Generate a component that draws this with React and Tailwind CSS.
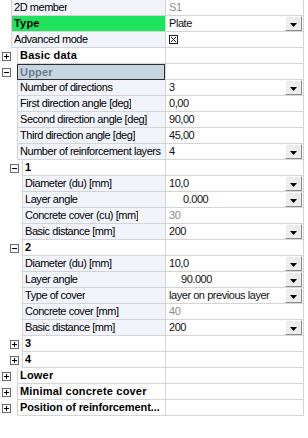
import React from "react";

const rows = [
  { kind: "prop", indent: 11, label: "2D member", value: "S1", gray: true },
  { kind: "prop", indent: 11, label: "Type", bold: true, green: true, value: "Plate", dd: true },
  { kind: "prop", indent: 11, label: "Advanced mode", check: true },
  { kind: "cat", label: "Basic data", icon: "plus" },
  { kind: "cat", label: "Upper", icon: "minus", selected: true },
  { kind: "prop", indent: 17, label: "Number of directions", value: "3", dd: true },
  { kind: "prop", indent: 17, label: "First direction angle [deg]", value: "0,00" },
  { kind: "prop", indent: 17, label: "Second direction angle [deg]", value: "90,00" },
  { kind: "prop", indent: 17, label: "Third direction angle [deg]", value: "45,00" },
  { kind: "prop", indent: 17, label: "Number of reinforcement layers", value: "4", dd: true },
  { kind: "sub", label: "1", icon: "minus" },
  { kind: "prop", indent: 22, label: "Diameter (du) [mm]", value: "10,0", dd: true },
  { kind: "prop", indent: 22, label: "Layer angle", value: "0.000", dd: true, pad: "pl-[17px]" },
  { kind: "prop", indent: 22, label: "Concrete cover (cu) [mm]", value: "30", gray: true },
  { kind: "prop", indent: 22, label: "Basic distance [mm]", value: "200", dd: true },
  { kind: "sub", label: "2", icon: "minus" },
  { kind: "prop", indent: 22, label: "Diameter (du) [mm]", value: "10,0", dd: true },
  { kind: "prop", indent: 22, label: "Layer angle", value: "90.000", dd: true, pad: "pl-[15px]" },
  { kind: "prop", indent: 22, label: "Type of cover", value: "layer on previous layer", dd: true },
  { kind: "prop", indent: 22, label: "Concrete cover [mm]", value: "40", gray: true },
  { kind: "prop", indent: 22, label: "Basic distance [mm]", value: "200", dd: true },
  { kind: "sub", label: "3", icon: "plus" },
  { kind: "sub", label: "4", icon: "plus" },
  { kind: "cat", label: "Lower", icon: "plus" },
  { kind: "cat", label: "Minimal concrete cover", icon: "plus" },
  { kind: "cat", label: "Position of reinforcement...", icon: "plus", tight: true },
];

function ToggleIcon({ type }) {
  return (
    <svg width="9" height="9" viewBox="0 0 9 9" className="block">
      <rect x="0.5" y="0.5" width="8" height="8" fill="#fff" stroke="#6b6b6b" />
      <line x1="2" y1="4.5" x2="7" y2="4.5" stroke="#000" />
      {type === "plus" && <line x1="4.5" y1="2" x2="4.5" y2="7" stroke="#000" />}
    </svg>
  );
}

function CheckGlyph() {
  return (
    <svg width="9" height="9" viewBox="0 0 9 9" className="block">
      <rect x="0.5" y="0.5" width="8" height="8" fill="#fff" stroke="#222" />
      <line x1="2" y1="2" x2="7" y2="7" stroke="#222" />
      <line x1="7" y1="2" x2="2" y2="7" stroke="#222" />
    </svg>
  );
}

function DropButton() {
  return (
    <div className="ml-auto mr-[1px] flex h-[15px] w-[17px] shrink-0 items-center justify-center border border-t-white border-l-white border-r-[#8c8c8c] border-b-[#8c8c8c] bg-[#ececec]">
      <svg width="7" height="4" viewBox="0 0 7 4" className="mt-[2px] block">
        <polygon points="0,0 7,0 3.5,4" fill="#000" />
      </svg>
    </div>
  );
}

function Row({ r }) {
  let left;
  if (r.kind === "prop") {
    left = (
      <div className="flex h-full w-[165px]">
        <div style={{ width: r.indent }} className="shrink-0" />
        <div
          className={
            "flex min-w-0 flex-1 items-center border-l border-b border-[#d4d4d4] pl-[2px] " +
            (r.green ? "bg-[#1fe35c] " : "bg-[#f1f4fb] ") +
            (r.bold ? "font-bold tracking-[0.2px]" : "tracking-[-0.45px]")
          }
        >
          <span className="truncate whitespace-nowrap text-black">{r.label}</span>
        </div>
      </div>
    );
  } else {
    const iconX = r.kind === "cat" ? 2 : 10;
    const cellX = r.kind === "cat" ? 17 : 22;
    left = (
      <div className="flex h-full w-[165px]">
        <div style={{ width: cellX }} className="relative shrink-0">
          <div className="absolute top-[4px]" style={{ left: iconX }}>
            <ToggleIcon type={r.icon} />
          </div>
        </div>
        <div
          className={
            "flex min-w-0 flex-1 items-center overflow-hidden font-bold " +
            (r.tight ? "tracking-[-0.1px] " : "tracking-[0.2px] ") +
            (r.selected
              ? "border border-[#2e2e2e] bg-[#c7d5e1] pl-[2px] text-[#6a7b8b]"
              : "border-l border-b border-[#d4d4d4] bg-white pl-[2px] text-black")
          }
        >
          <span className="whitespace-nowrap">{r.label}</span>
        </div>
      </div>
    );
  }

  return (
    <div className="flex h-[16px]">
      {left}
      <div className="flex h-full w-[139px] items-center border-l border-r border-b border-[#d4d4d4] bg-white">
        {r.check ? (
          <div className="pl-[3px]">
            <CheckGlyph />
          </div>
        ) : r.value ? (
          <span
            className={
              "whitespace-nowrap tracking-[-0.45px] " +
              (r.pad ? r.pad + " " : "pl-[3px] ") +
              (r.gray ? "text-[#8d8d8d]" : "text-[#111]")
            }
          >
            {r.value}
          </span>
        ) : null}
        {r.dd && <DropButton />}
      </div>
    </div>
  );
}

export default function App() {
  return (
    <div
      className="h-[438px] w-[308px] bg-white text-[11px] leading-[15px]"
      style={{ fontFamily: '"Liberation Sans", Arial, sans-serif' }}
    >
      <div className="w-[304px]">
        {rows.map((r, i) => (
          <Row key={i} r={r} />
        ))}
      </div>
    </div>
  );
}
